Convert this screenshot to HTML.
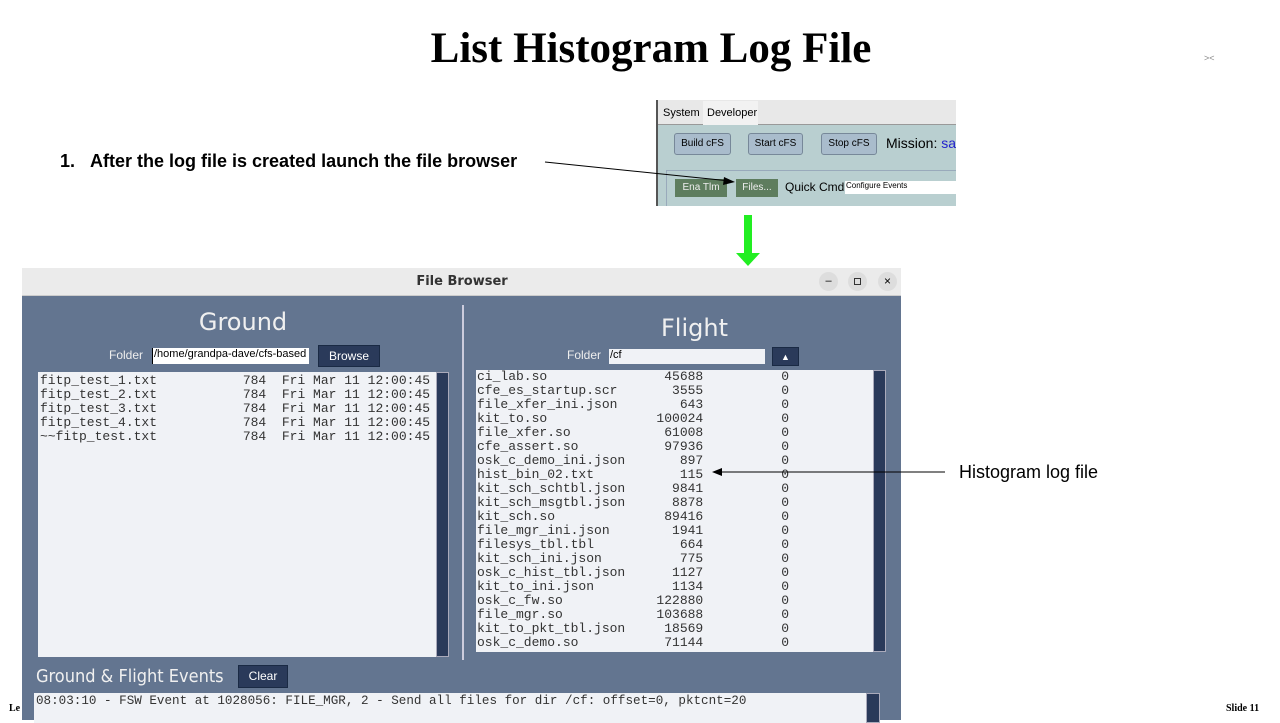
<!DOCTYPE html>
<html><head><meta charset="utf-8"><style>
*{margin:0;padding:0;box-sizing:border-box}
body{width:1280px;height:720px;position:relative;background:#fff;overflow:hidden;font-family:"Liberation Sans",sans-serif}
.a{position:absolute}
.mono{font-family:"Liberation Mono",monospace;font-size:13px;line-height:14px;color:#333;white-space:pre}
.sb{background:#2a3a5a;border:1px solid #aab}
.btn{background:#2a3a5a;color:#fff;font-size:12px;text-align:center;border:1px solid #1a2a44}
</style></head><body>
<div class="a" style="left:0;width:1302px;top:24px;text-align:center;font:bold 43px 'Liberation Serif',serif;white-space:nowrap">List Histogram Log File</div>
<div class="a" style="left:1204px;top:53px;font-size:9px;color:#888">&gt;&lt;</div>
<div class="a" style="left:60px;top:151px;font:bold 18px 'Liberation Sans',sans-serif">1.&nbsp;&nbsp;&nbsp;After the log file is created launch the file browser</div>

<!-- inset -->
<div class="a" style="left:656px;top:100px;width:300px;height:106px;background:#b9cfd0;border-left:2px solid #555;overflow:hidden;white-space:nowrap">
 <div class="a" style="left:0;top:0;width:298px;height:25px;background:#e8e8e8;border-bottom:1px solid #999"></div>
 <div class="a" style="left:5px;top:7px;font-size:11px">System</div>
 <div class="a" style="left:45px;top:1px;width:55px;height:24px;background:#f2f2f2"></div>
 <div class="a" style="left:49px;top:7px;font-size:11px">Developer</div>
 <div class="a" style="left:16px;top:33px;width:57px;height:22px;background:#a9bccc;border:1px solid #789;border-radius:3px;font-size:10px;text-align:center;line-height:20px">Build cFS</div>
 <div class="a" style="left:90px;top:33px;width:55px;height:22px;background:#a9bccc;border:1px solid #789;border-radius:3px;font-size:10px;text-align:center;line-height:20px">Start cFS</div>
 <div class="a" style="left:163px;top:33px;width:56px;height:22px;background:#a9bccc;border:1px solid #789;border-radius:3px;font-size:10px;text-align:center;line-height:20px">Stop cFS</div>
 <div class="a" style="left:228px;top:35px;font-size:14px">Mission: <span style="color:#22c">san</span></div>
 <div class="a" style="left:8px;top:70px;width:294px;height:40px;border:1px solid #9ab;border-right:none"></div>
 <div class="a" style="left:17px;top:79px;width:52px;height:18px;background:#5e7d5e;color:#eee;font-size:10px;text-align:center;line-height:18px">Ena Tlm</div>
 <div class="a" style="left:78px;top:79px;width:42px;height:18px;background:#5e7d5e;color:#eee;font-size:10px;text-align:center;line-height:18px">Files...</div>
 <div class="a" style="left:127px;top:80px;font-size:12px">Quick Cmd:</div>
 <div class="a" style="left:187px;top:81px;width:112px;height:13px;background:#fff;font-size:8px;padding-left:1px">Configure Events</div>
</div>
<svg class="a" style="left:0;top:0" width="1280" height="720">
 <line x1="545" y1="162" x2="730" y2="181" stroke="#000" stroke-width="1"/>
 <polygon points="735,182 724,177 723,185" fill="#000"/>
 <rect x="744" y="215" width="8" height="40" fill="#22ee22"/>
 <polygon points="736,253 760,253 748,266" fill="#22ee22"/>
</svg>

<!-- window -->
<div class="a" style="left:22px;top:268px;width:879px;height:452px;background:#637590">
 <div class="a" style="left:0;top:0;width:879px;height:28px;background:#ebebeb;border-bottom:1px solid #ccc"></div>
 <div class="a" style="left:0;top:6px;width:880px;text-align:center;font:bold 13px 'DejaVu Sans',sans-serif;color:#333">File Browser</div>
 <div class="a" style="left:797px;top:4px;width:19px;height:19px;border-radius:50%;background:#ddd;font-size:11px;text-align:center;line-height:19px">–</div>
 <div class="a" style="left:826px;top:4px;width:19px;height:19px;border-radius:50%;background:#ddd;"><div class="a" style="left:6px;top:6px;width:7px;height:7px;border:1px solid #333"></div></div>
 <div class="a" style="left:856px;top:4px;width:19px;height:19px;border-radius:50%;background:#ddd;font-size:12px;text-align:center;line-height:19px">×</div>
 <div class="a" style="left:0;top:40px;width:442px;text-align:center;font:24px 'DejaVu Sans',sans-serif;color:#f0f0f0">Ground</div>
 <div class="a" style="left:87px;top:80px;font-size:12px;color:#eee">Folder</div>
 <div class="a" style="left:130px;top:80px;width:157px;height:16px;background:#fff;font-size:11px;overflow:hidden;white-space:nowrap;padding-left:1px;border-left:1px solid #000">/home/grandpa-dave/cfs-based</div>
 <div class="a btn" style="left:296px;top:77px;width:62px;height:22px;line-height:20px">Browse</div>
 <div class="a" style="left:440px;top:37px;width:2px;height:355px;background:#ccd"></div>
 <div class="a" style="left:455px;top:46px;width:435px;text-align:center;font:24px 'DejaVu Sans',sans-serif;color:#f0f0f0">Flight</div>
 <div class="a" style="left:545px;top:80px;font-size:12px;color:#eee">Folder</div>
 <div class="a" style="left:587px;top:81px;width:156px;height:15px;background:#f0f2f6;font-size:11px;padding-left:1px">/cf</div>
 <div class="a btn" style="left:750px;top:79px;width:27px;height:19px;line-height:18px;font-size:9px">▲</div>
 <div class="a mono" style="left:16px;top:104px;width:398px;height:285px;background:#f0f2f6;padding:2px 2px;overflow:hidden">fitp_test_1.txt           784  Fri Mar 11 12:00:45
fitp_test_2.txt           784  Fri Mar 11 12:00:45
fitp_test_3.txt           784  Fri Mar 11 12:00:45
fitp_test_4.txt           784  Fri Mar 11 12:00:45
~~fitp_test.txt           784  Fri Mar 11 12:00:45</div>
 <div class="a sb" style="left:414px;top:104px;width:13px;height:285px"></div>
 <div class="a mono" style="left:454px;top:102px;width:397px;height:282px;background:#f0f2f6;padding:0 1px;overflow:hidden;line-height:14px">ci_lab.so               45688          0
cfe_es_startup.scr       3555          0
file_xfer_ini.json        643          0
kit_to.so              100024          0
file_xfer.so            61008          0
cfe_assert.so           97936          0
osk_c_demo_ini.json       897          0
hist_bin_02.txt           115          0
kit_sch_schtbl.json      9841          0
kit_sch_msgtbl.json      8878          0
kit_sch.so              89416          0
file_mgr_ini.json        1941          0
filesys_tbl.tbl           664          0
kit_sch_ini.json          775          0
osk_c_hist_tbl.json      1127          0
kit_to_ini.json          1134          0
osk_c_fw.so            122880          0
file_mgr.so            103688          0
kit_to_pkt_tbl.json     18569          0
osk_c_demo.so           71144          0</div>
 <div class="a sb" style="left:851px;top:102px;width:13px;height:282px"></div>
 <div class="a" style="left:14px;top:398px;font:18px 'DejaVu Sans Condensed','DejaVu Sans',sans-serif;color:#f0f0f0">Ground &amp; Flight Events</div>
 <div class="a btn" style="left:216px;top:397px;width:50px;height:23px;line-height:20px">Clear</div>
 <div class="a mono" style="left:12px;top:425px;width:832px;height:30px;background:#f0f2f6;padding:1px 2px;font-size:12.6px">08:03:10 - FSW Event at 1028056: FILE_MGR, 2 - Send all files for dir /cf: offset=0, pktcnt=20</div>
 <div class="a sb" style="left:844px;top:425px;width:14px;height:30px"></div>
</div>
<svg class="a" style="left:0;top:0" width="1280" height="720">
 <line x1="945" y1="472" x2="720" y2="472" stroke="#000"/>
 <polygon points="712,472 722,468 722,476" fill="#000"/>
</svg>
<div class="a" style="left:959px;top:462px;font-size:18px">Histogram log file</div>
<div class="a" style="left:9px;top:703px;font:bold 10px 'Liberation Serif',serif">Le</div>
<div class="a" style="left:1226px;top:703px;font:bold 10px 'Liberation Serif',serif">Slide 11</div>
</body></html>
